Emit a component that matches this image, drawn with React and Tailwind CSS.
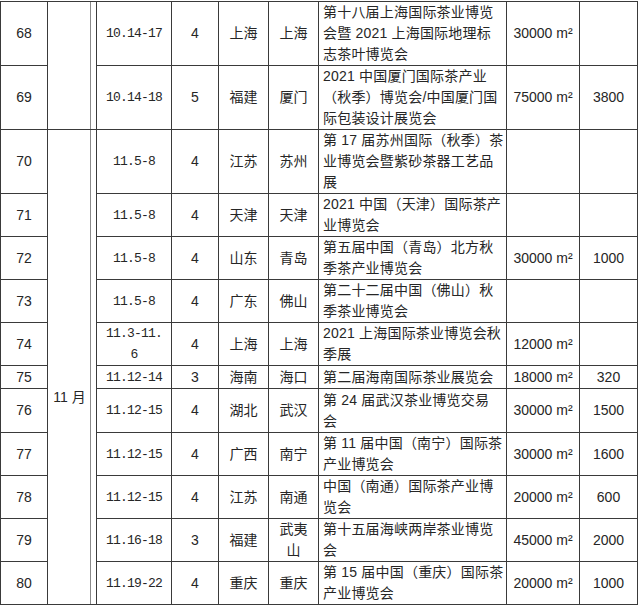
import React from "react";

/* ---------------- data ---------------- */
const rows = [
  { no: 68, date: ["10.14-17"], days: 4, prov: ["上海"], city: ["上海"], name: ["第十八届上海国际茶业博览", "会暨 2021 上海国际地理标", "志茶叶博览会"], area: "30000", booths: "", h: "h-[64px]" },
  { no: 69, date: ["10.14-18"], days: 5, prov: ["福建"], city: ["厦门"], name: ["2021 中国厦门国际茶产业", "（秋季）博览会/中国厦门国", "际包装设计展览会"], area: "75000", booths: "3800", h: "h-[64px]" },
  { no: 70, date: ["11.5-8"], days: 4, prov: ["江苏"], city: ["苏州"], name: ["第 17 届苏州国际（秋季）茶", "业博览会暨紫砂茶器工艺品", "展"], area: "", booths: "", h: "h-[64px]" },
  { no: 71, date: ["11.5-8"], days: 4, prov: ["天津"], city: ["天津"], name: ["2021 中国（天津）国际茶产", "业博览会"], area: "", booths: "", h: "h-[43px]" },
  { no: 72, date: ["11.5-8"], days: 4, prov: ["山东"], city: ["青岛"], name: ["第五届中国（青岛）北方秋", "季茶产业博览会"], area: "30000", booths: "1000", h: "h-[43px]" },
  { no: 73, date: ["11.5-8"], days: 4, prov: ["广东"], city: ["佛山"], name: ["第二十二届中国（佛山）秋", "季茶业博览会"], area: "", booths: "", h: "h-[43px]" },
  { no: 74, date: ["11.3-11.", "6"], days: 4, prov: ["上海"], city: ["上海"], name: ["2021 上海国际茶业博览会秋", "季展"], area: "12000", booths: "", h: "h-[43px]" },
  { no: 75, date: ["11.12-14"], days: 3, prov: ["海南"], city: ["海口"], name: ["第二届海南国际茶业展览会"], area: "18000", booths: "320", h: "h-[23px]" },
  { no: 76, date: ["11.12-15"], days: 4, prov: ["湖北"], city: ["武汉"], name: ["第 24 届武汉茶业博览交易", "会"], area: "30000", booths: "1500", h: "h-[44px]" },
  { no: 77, date: ["11.12-15"], days: 4, prov: ["广西"], city: ["南宁"], name: ["第 11 届中国（南宁）国际茶", "产业博览会"], area: "30000", booths: "1600", h: "h-[43px]" },
  { no: 78, date: ["11.12-15"], days: 4, prov: ["江苏"], city: ["南通"], name: ["中国（南通）国际茶产业博", "览会"], area: "20000", booths: "600", h: "h-[43px]" },
  { no: 79, date: ["11.16-18"], days: 3, prov: ["福建"], city: ["武夷", "山"], name: ["第十五届海峡两岸茶业博览", "会"], area: "45000", booths: "2000", h: "h-[43px]" },
  { no: 80, date: ["11.19-22"], days: 4, prov: ["重庆"], city: ["重庆"], name: ["第 15 届中国（重庆）国际茶", "产业博览会"], area: "20000", booths: "1000", h: "h-[42px]" },
];

/* ---------------- helpers ---------------- */
const cell = "border border-[#3a3a3a] p-0 align-middle leading-[21px]";
const cjk = "font-['Liberation_Sans','Noto_Sans_CJK_SC',sans-serif]";
const mono = "font-['Liberation_Mono','Noto_Sans_CJK_SC',monospace] text-[13px] tracking-[-0.8px]";
const monthCell = "border border-[#3a3a3a] p-0 align-top shadow-[inset_-5px_0_0_#ffffff,inset_-6px_0_0_#8a8a8a]";

const Lines = ({ lines }) =>
  lines.map((l, i) => (
    <div key={i} className="whitespace-nowrap">
      {l}
    </div>
  ));

const Area = ({ v }) => (v ? <span>{v} m²</span> : null);

/* ---------------- main ---------------- */
export default function App() {
  return (
    <div className={`w-[640px] h-[605px] bg-white overflow-hidden pt-px text-[#262626] text-[14px] ${cjk}`}>
      <table className="border-collapse table-fixed w-[637px]">
        <colgroup>
          <col className="w-[47px]" />
          <col className="w-[49px]" />
          <col className="w-[75px]" />
          <col className="w-[47px]" />
          <col className="w-[50px]" />
          <col className="w-[50px]" />
          <col className="w-[188px]" />
          <col className="w-[73px]" />
          <col className="w-[58px]" />
        </colgroup>
        <tbody>
          {rows.map((r, i) => (
            <tr key={r.no} className={r.h}>
              <td className={`${cell} text-center`}>{r.no}</td>
              {i === 0 && <td rowSpan={2} className={monthCell} />}
              {i === 2 && (
                <td rowSpan={11} className={monthCell}>
                  <div className="pt-[257px] pr-[5px] text-center leading-[21px]">11 月</div>
                </td>
              )}
              <td className={`${cell} text-center ${mono}`}>
                <Lines lines={r.date} />
              </td>
              <td className={`${cell} text-center`}>{r.days}</td>
              <td className={`${cell} text-center`}>
                <Lines lines={r.prov} />
              </td>
              <td className={`${cell} text-center`}>
                <Lines lines={r.city} />
              </td>
              <td className={`${cell} pl-[4px] tracking-[0.2px]`}>
                <Lines lines={r.name} />
              </td>
              <td className={`${cell} text-center`}>
                <Area v={r.area} />
              </td>
              <td className={`${cell} text-center`}>{r.booths}</td>
            </tr>
          ))}
        </tbody>
      </table>
    </div>
  );
}
